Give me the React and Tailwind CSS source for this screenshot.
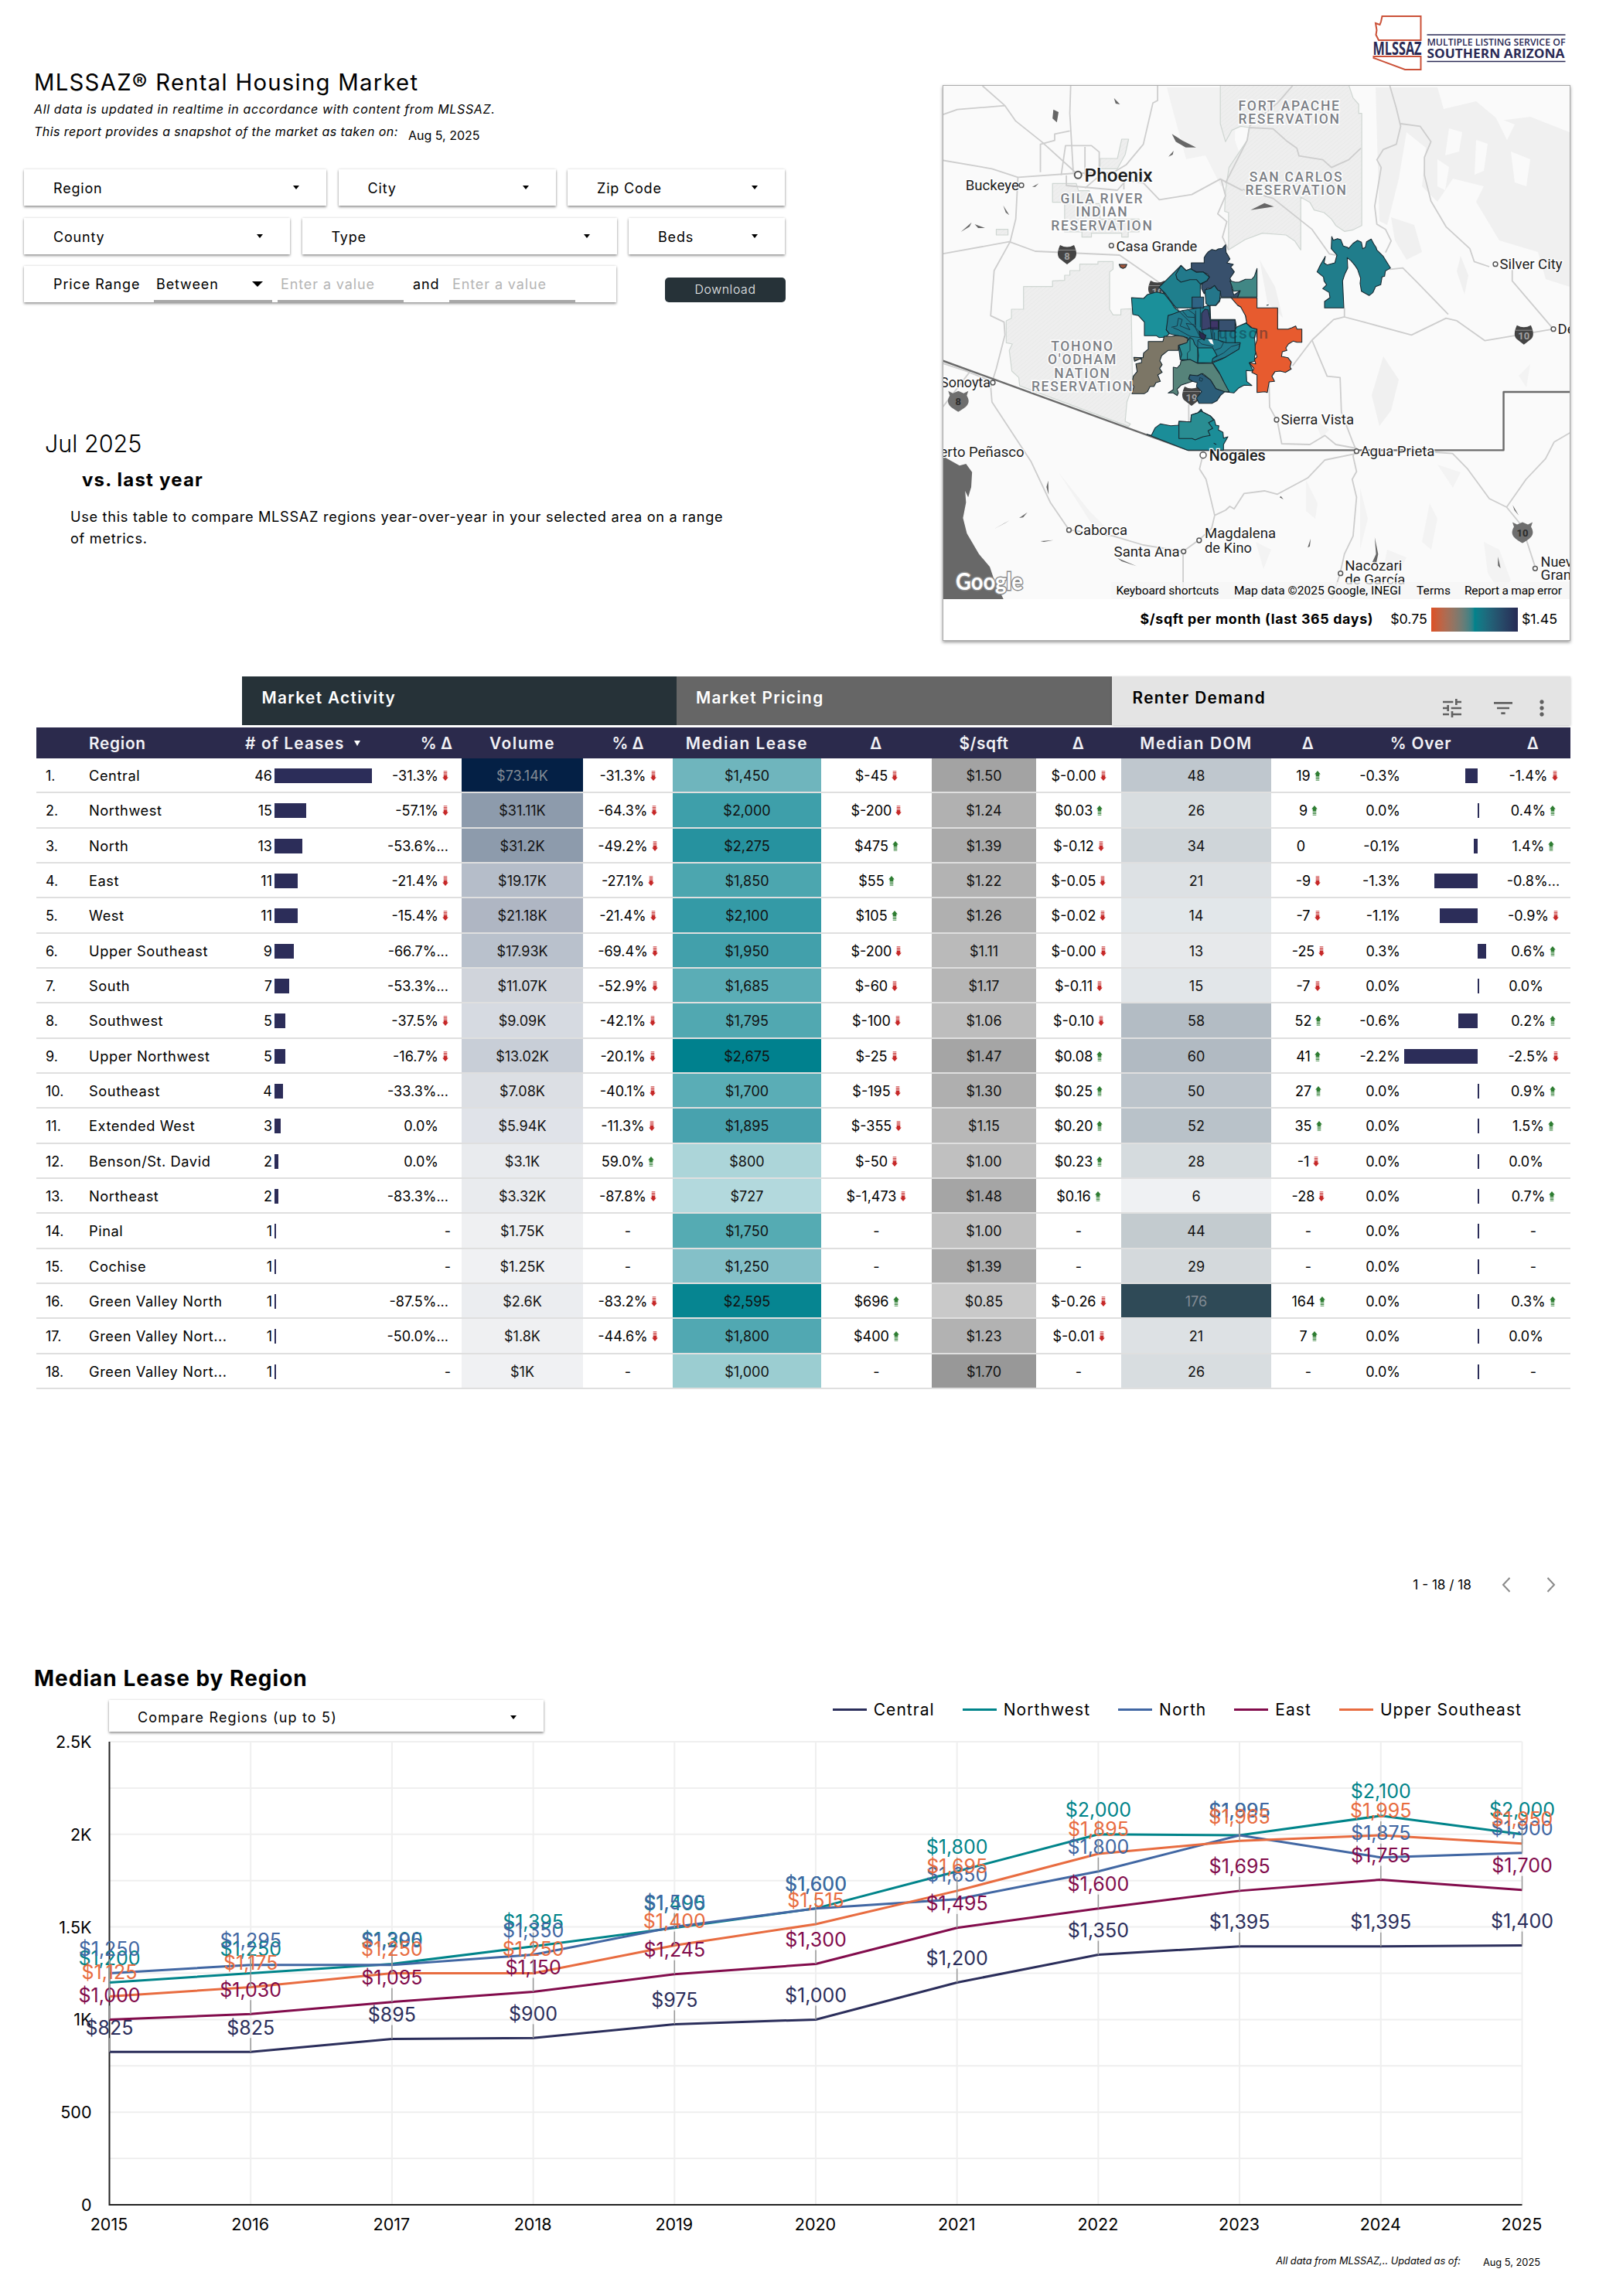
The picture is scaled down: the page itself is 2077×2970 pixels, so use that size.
import { MdTune, MdFilterList, MdMoreVert } from "react-icons/md";

const filters = [
  [
    { label: "Region", width: "w-[391px]" },
    { label: "City", width: "w-[281px]" },
    { label: "Zip Code", width: "w-[281px]" },
  ],
  [
    { label: "County", width: "w-[344px]" },
    { label: "Type", width: "w-[407px]" },
    { label: "Beds", width: "w-[202px]" },
  ],
];

// region, leases, leases Δ, volume, volume Δ, lease, lease Δ, $/sqft, $/sqft Δ, DOM, DOM Δ, % over, % over bar px, % over Δ
// Δ values end in "+" (up), "!" (down) or "=" (no arrow)
const rows = [
  ["Central", 46, "-31.3%!", ["$73.14K", "#042045"], "-31.3%!", ["$1,450", "#6fb5bd"], "$-45!", ["$1.50", "#a3a3a3"], "$-0.00!", ["48", "#bfc7ce"], "19+", "-0.3%", -16, "-1.4%!"],
  ["Northwest", 15, "-57.1%!", ["$31.11K", "#8d9bac"], "-64.3%!", ["$2,000", "#3e9faa"], "$-200!", ["$1.24", "#b1b1b1"], "$0.03+", ["26", "#d8dde0"], "9+", "0.0%", 0, "0.4%+"],
  ["North", 13, "-53.6%...", ["$31.2K", "#8d9bac"], "-49.2%!", ["$2,275", "#26929f"], "$475+", ["$1.39", "#aaaaaa"], "$-0.12!", ["34", "#cfd5d9"], "0=", "-0.1%", -5, "1.4%+"],
  ["East", 11, "-21.4%!", ["$19.17K", "#b5bdc9"], "-27.1%!", ["$1,850", "#4ca6af"], "$55+", ["$1.22", "#b3b3b3"], "$-0.05!", ["21", "#dde1e4"], "-9!", "-1.3%", -56, "-0.8%..."],
  ["West", 11, "-15.4%!", ["$21.18K", "#afb6c3"], "-21.4%!", ["$2,100", "#349aa6"], "$105+", ["$1.26", "#b0b0b0"], "$-0.02!", ["14", "#e2e7ea"], "-7!", "-1.1%", -49, "-0.9%!"],
  ["Upper Southeast", 9, "-66.7%...", ["$17.93K", "#b9c1cc"], "-69.4%!", ["$1,950", "#42a0ab"], "$-200!", ["$1.11", "#bababa"], "$-0.00!", ["13", "#e7e9eb"], "-25!", "0.3%", 11, "0.6%+"],
  ["South", 7, "-53.3%...", ["$11.07K", "#d0d4db"], "-52.9%!", ["$1,685", "#5badb6"], "$-60!", ["$1.17", "#b6b6b6"], "$-0.11!", ["15", "#e2e6e9"], "-7!", "0.0%", 0, "0.0%="],
  ["Southwest", 5, "-37.5%!", ["$9.09K", "#d6dae1"], "-42.1%!", ["$1,795", "#51a8b1"], "$-100!", ["$1.06", "#bdbdbd"], "$-0.10!", ["58", "#b3bcc4"], "52+", "-0.6%", -25, "0.2%+"],
  ["Upper Northwest", 5, "-16.7%!", ["$13.02K", "#c8ced7"], "-20.1%!", ["$2,675", "#00818e"], "$-25!", ["$1.47", "#a5a5a5"], "$0.08+", ["60", "#b1bac2"], "41+", "-2.2%", -95, "-2.5%!"],
  ["Southeast", 4, "-33.3%...", ["$7.08K", "#dcdfe4"], "-40.1%!", ["$1,700", "#5aadb6"], "$-195!", ["$1.30", "#afafaf"], "$0.25+", ["50", "#bcc4cb"], "27+", "0.0%", 0, "0.9%+"],
  ["Extended West", 3, "0.0%=", ["$5.94K", "#e0e3e9"], "-11.3%!", ["$1,895", "#48a2ae"], "$-355!", ["$1.15", "#b8b8b8"], "$0.20+", ["52", "#b9c2c9"], "35+", "0.0%", 0, "1.5%+"],
  ["Benson/St. David", 2, "0.0%=", ["$3.1K", "#e9ebee"], "59.0%+", ["$800", "#acd5d9"], "$-50!", ["$1.00", "#c0c0c0"], "$0.23+", ["28", "#d5dbde"], "-1!", "0.0%", 0, "0.0%="],
  ["Northeast", 2, "-83.3%...", ["$3.32K", "#e9ebee"], "-87.8%!", ["$727", "#b3d9dd"], "$-1,473!", ["$1.48", "#a5a5a5"], "$0.16+", ["6", "#eff1f3"], "-28!", "0.0%", 0, "0.7%+"],
  ["Pinal", 1, "-", ["$1.75K", "#eff0f2"], "-", ["$1,750", "#55abb3"], "-", ["$1.00", "#c0c0c0"], "-", ["44", "#c3cbcf"], "-", "0.0%", 0, "-"],
  ["Cochise", 1, "-", ["$1.25K", "#f0f1f3"], "-", ["$1,250", "#84c0c8"], "-", ["$1.39", "#aaaaaa"], "-", ["29", "#d4d9dc"], "-", "0.0%", 0, "-"],
  ["Green Valley North", 1, "-87.5%...", ["$2.6K", "#ebedf0"], "-83.2%!", ["$2,595", "#068591"], "$696+", ["$0.85", "#c9c9c9"], "$-0.26!", ["176", "#2f4a57"], "164+", "0.0%", 0, "0.3%+"],
  ["Green Valley Nort...", 1, "-50.0%...", ["$1.8K", "#eff0f2"], "-44.6%!", ["$1,800", "#51a8b2"], "$400+", ["$1.23", "#b2b2b2"], "$-0.01!", ["21", "#dde1e4"], "7+", "0.0%", 0, "0.0%="],
  ["Green Valley Nort...", 1, "-", ["$1K", "#f0f1f3"], "-", ["$1,000", "#9bcdd1"], "-", ["$1.70", "#989898"], "-", ["26", "#d8dde0"], "-", "0.0%", 0, "-"],
];

const series = [
  { name: "Central", color: "#2b2e5b", values: [825, 825, 895, 900, 975, 1000, 1200, 1350, 1395, 1395, 1400] },
  { name: "Northwest", color: "#00848a", values: [1200, 1250, 1300, 1395, 1495, 1600, 1800, 2000, 1995, 2100, 2000] },
  { name: "North", color: "#4167a3", values: [1250, 1295, 1295, 1350, 1500, 1600, 1650, 1800, 1995, 1875, 1900] },
  { name: "East", color: "#820c4c", values: [1000, 1030, 1095, 1150, 1245, 1300, 1495, 1600, 1695, 1755, 1700] },
  { name: "Upper Southeast", color: "#e86c40", values: [1125, 1175, 1250, 1250, 1400, 1515, 1695, 1895, 1965, 1995, 1950] },
];

const COLS =
  "grid grid-cols-[55px_203px_188px_104px_157px_116px_192px_143px_135px_110px_194px_96px_195px_96px]";

function Caret({ className = "border-x-[4.5px] border-t-[5px]" }) {
  return <span className={`block h-0 w-0 border-x-transparent border-t-black ${className}`} />;
}

function FilterBox({ label, width }) {
  return (
    <div
      className={`${width} flex h-[47px] items-center justify-between bg-white pl-[38px] pr-[35px] shadow-[0_2px_3px_rgba(0,0,0,0.38),0_0_3px_rgba(0,0,0,0.14)]`}
    >
      <span className="pt-[2px] text-[18px] tracking-[0.045em]">{label}</span>
      <Caret />
    </div>
  );
}

function Logo() {
  return (
    <svg width="252" height="74" viewBox="1774 18 252 74" fill="none">
      <path d="M1787.5 21H1837.5V52H1783L1779.5 45L1780.5 39L1779 30L1784.5 32L1786 28Z" stroke="#cb5138" strokeWidth="2" />
      <path d="M1776.5 73H1837.5V90H1817L1776.5 75Z" stroke="#cb5138" strokeWidth="2" />
      <g fill="#2a2a55" fontFamily="Open Sans, sans-serif" fontWeight="700">
        <text x="1775.5" y="71" fontSize="23" textLength="63" lengthAdjust="spacingAndGlyphs">MLSSAZ</text>
        <text x="1845.5" y="59.3" fontSize="12.2" fontWeight="600" textLength="179" lengthAdjust="spacingAndGlyphs">MULTIPLE LISTING SERVICE OF</text>
        <text x="1845.5" y="75.3" fontSize="16" textLength="178" lengthAdjust="spacingAndGlyphs">SOUTHERN ARIZONA</text>
      </g>
      <path d="M1845.5 45H2024.5M1845.5 79.5H2024.5" stroke="#2a2a55" strokeWidth="1.6" />
    </svg>
  );
}

const cities = [
  { name: "Buckeye", x: 29.8, y: 135, len: 69, cx: 102, cy: 128.7 },
  { name: "Casa Grande", x: 224.4, y: 214, len: 105, cx: 218.3, cy: 206.7 },
  { name: "Silver City", x: 720.5, y: 237, len: 81, cx: 715, cy: 230.7 },
  { name: "De", x: 795.5, y: 321, len: 22, cx: 790, cy: 314.7 },
  { name: "Sierra Vista", x: 437.5, y: 438, len: 94.5, cx: 432, cy: 432 },
  { name: "Agua Prieta", x: 540.4, y: 478.7, len: 96, cx: 535.4, cy: 472.7 },
  { name: "Sonoyta", x: -3, y: 390, len: 65, cx: 65, cy: 384 },
  { name: "Caborca", x: 170, y: 580.7, len: 69, cx: 163.5, cy: 574.7 },
  { name: "Magdalena", x: 339, y: 585.3, len: 92, cx: 331.8, cy: 588 },
  { name: "de Kino", x: 339, y: 603.7, len: 61 },
  { name: "Santa Ana", x: 221.6, y: 609, len: 85, cx: 311.7, cy: 602.3 },
  { name: "Nacozari", x: 520.3, y: 627, len: 74, cx: 514.7, cy: 630.7 },
  { name: "de García", x: 520.3, y: 645, len: 78 },
  { name: "Nuevo", x: 773.6, y: 621.7, len: 51, cx: 766.4, cy: 624.3 },
  { name: "Grande", x: 773.6, y: 639, len: 60 },
];

const areas = [
  { x: 447.6, y: 31.7, lines: ["FORT APACHE", "RESERVATION"] },
  { x: 456.5, y: 123.7, lines: ["SAN CARLOS", "RESERVATION"] },
  { x: 205.4, y: 152, lines: ["GILA RIVER", "INDIAN", "RESERVATION"] },
  { x: 180, y: 343, lines: ["TOHONO", "O'ODHAM", "NATION", "RESERVATION"] },
];

const zips = [
  ["#38506c", "M355 160L362 148L370 138L385 128L400 132L410 126L425 124L438 110L440 140L448 152L455 165L443 180L468 186L458 196L472 215L455 240L465 262L462 280L470 305L495 288L485 313H420L418 290L408 286L395 268L380 278L365 280L355 300L345 280V265L352 255L365 250L375 235L368 224L350 215H325L305 205V180H355Z"],
  ["#418785", "M455 250L475 255L490 255L515 244L540 243L550 232L560 202V313H485L495 288L468 290L462 270Z"],
  ["#1f7f8d", "M180 275L265 190L285 210L302 203L325 217L350 215L375 235L365 250L340 265V355H245L205 300Z"],
  ["#22798b", "M245 225L265 190L285 210L302 203L325 217L350 215L375 235L365 250L340 262L325 245L300 245L265 255L250 243Z"],
  ["#1b909a", "M73 315L120 318L135 303L170 293L200 300L228 335L240 355L260 370L235 380L215 385V405L208 440L220 455L205 468L180 470L170 463H123V410L100 385L78 380Z"],
  ["#217a8c", "M208 440L215 385L235 378L270 365L335 355L375 345L380 400H475V490H495L490 515L465 530L440 545L388 565L330 570L262 555L255 500L285 490L290 470L250 462L220 455Z"],
  ["#24768a", "M358 285L380 280L395 268L408 286L418 290L415 325L400 345L375 348L362 338Z"],
  ["#2f6384", "M308 313H353V355H308Z"],
  ["#3b426c", "M345 375L358 360L370 362L378 400L380 435L345 440Z"],
  ["#3f3568", "M380 404H410V438H380Z"],
  ["#37506f", "M412 402H475V445H412Z"],
  ["#1c8090", "M410 445H475V490H440L410 480Z"],
  ["#2a8a90", "M257 500L285 490L300 470L312 478L318 495L330 510V570L300 556L262 555L268 535Z"],
  ["#1b909a", "M330 510H388L405 540L388 552L385 568H330L333 540Z"],
  ["#1b8e98", "M480 430L495 420L520 415L535 430L560 437L550 470L553 500L558 520L550 545L555 560L530 568L545 600L518 598L520 640L540 656L510 655L490 665L470 685L435 680L430 640L410 600L388 568L420 555L440 545L465 530L490 515L495 490H475V440Z"],
  ["#e75b2f", "M458 316H560V355H640V437H680L695 432L710 425L715 437H734V488H715L700 484L682 495L672 510L676 520L658 525L655 543L680 548L693 565L688 585L693 592L670 605L650 600L630 602L618 620L628 640L607 642L600 683L590 680L560 683V615L540 605L548 590L530 568L555 572L550 555L560 545L553 520V500L560 480V437L540 432L520 415L515 385L500 370L497 352L485 345L463 332Z"],
  ["#7c7666", "M138 485H195L200 465H230L250 462L275 466L292 475L288 490L255 500V520H215L190 540L183 560L192 575L182 590L192 605L175 615L185 640L168 645L160 660L145 660L135 680L122 688H75L82 660L75 650L80 620L95 602L90 572L112 567V550L85 562L82 547L118 548L120 530L138 515Z"],
  ["#56837a", "M235 585L250 588L262 575L265 560L300 555L330 570H388L402 592L415 610L430 640L452 680L430 680L400 668L392 655L380 635L350 610L325 620L300 615L295 630L310 640L265 655L250 670L255 685L250 695L235 685L215 685L235 672Z"],
  ["#2c5d78", "M295 630L300 615L330 618L345 610L380 635L392 655L400 668L435 680L418 695L405 715L385 725L335 725L325 705L345 680L325 660L328 645L310 640Z"],
  ["#1b8d98", "M133 845L150 850L165 820L185 805L225 812L255 810L257 795L303 797L305 770L330 762L343 748L350 760L380 775L395 790L400 810L412 812L410 828L428 838L430 860L447 855L430 885V907H290Z"],
  ["#298d92", "M257 795L303 797L305 770L330 762L343 755L380 775L392 790L372 800L388 822L370 832L378 850L350 855L320 867L308 862H257Z"],
  ["#207d8b", "M850 78L856 92L872 86L885 90L895 115L912 120L915 125L932 105L950 93L965 100L970 125L980 120L985 98L1003 88L1015 110L1022 120L1025 130L1050 155L1078 200L1058 212L1055 232L1045 235L1040 265L1020 272L1010 295L995 307L965 290L960 260L962 240L955 220L950 205L940 190L925 172L910 160L912 200L900 225L892 250L897 355H822V330L843 315L840 295L815 280L830 265L820 250L818 235L793 215L805 190L825 155L820 180L832 188L862 180L870 150L848 125Z"],
  ["#a0563c", "M25 186H55L50 197L40 202L30 197Z"],
];

function Shield({ x, y, label, us }) {
  return (
    <g transform={`translate(${x} ${y})`}>
      <path
        d={us ? "M-13 0L-7 3L0 0L7 3L13 0L11 6C17 16 11 21 0 27C-11 21 -17 16 -11 6Z" : "M-9 0Q0 5 9 0Q15 13 9 18Q4 22 0 25Q-4 22 -9 18Q-15 13 -9 0Z"}
        fill={us ? "#6e6e6e" : "#444"}
      />
      {!us && <path d="M-11 6.5H11" stroke="#8a8a8a" strokeWidth="1" />}
      <text y="18.5" fontSize="13" fontWeight="700" textAnchor="middle" fill={us ? "#2b2b2b" : "#a0a0a0"}>{label}</text>
    </g>
  );
}

function RegionMap() {
  return (
    <svg className="block" width="810" height="664" viewBox="1 0 810 664" fontFamily="Roboto, sans-serif">
      <defs>
        <pattern id="hatch" width="9" height="9" patternUnits="userSpaceOnUse" patternTransform="rotate(35)">
          <rect width="9" height="9" fill="#eeeeee" />
          <path d="M0 0V9" stroke="#e5e8e6" strokeWidth="2" />
        </pattern>
      </defs>
      <rect width="812" height="666" fill="#fafafa" />
      <g fill="#f0f0f0">
        <path d="M290 2L380 2L378 70L395 120L360 130L340 90L315 95L300 40Z" fill="#f2f2f2" />
        <path d="M560 2H640L648 30L690 20L720 45L760 40L811 60V260L780 250L770 215L720 200L690 150L700 130L660 120L640 150L620 130L625 80L600 60L590 120L575 180L565 175Z" />
        <path d="M655 55L672 60L668 85L650 90Z M690 70L705 75L700 110L688 115Z M735 85L760 95L755 130L740 125Z M715 40L740 50L730 70Z M640 95L655 105L650 135L640 130Z" fill="#fafafa" />
        <path d="M580 170L610 180L620 215L600 225L585 200Z M410 225L430 260L440 300L420 280Z M670 220L680 245L675 270L665 240Z M570 350L590 380L580 420L565 440L555 400Z M655 60L670 70" />
        <path d="M470 510L485 540L482 560L470 550Z M630 540L640 560L632 600L620 590Z M700 590L720 600L735 640L720 655L705 630Z M640 490L670 500L660 520Z M540 520L550 560L540 600Z M150 500L190 550L210 570L195 570Z M760 360L745 375L755 390Z M575 600L600 610L590 630L570 625Z M405 590L425 600L415 625Z M480 430L500 445L490 455Z" fill="#f3f3f3" />
      </g>
      <g transform="translate(-20 -111) scale(0.5593 0.33333)" fill="none" strokeLinejoin="round">
        <g fill="url(#hatch)" stroke="#cfd6d2" strokeWidth="1.2">
          <path vectorEffect="non-scaling-stroke" d="M678 330H975L985 380L998 405V440H1005V875L985 892L965 898L945 875L935 850L918 825L895 815L885 785L864 765V970L850 935L830 912L775 905L735 930L697 970V825L688 820L690 740L698 650L740 545L745 495L725 490L705 505L690 550L678 480Z" />
          <path vectorEffect="non-scaling-stroke" d="M223 1112H290V1090L318 1088V1068H330V1050H353V1025H395V1015H430V1045L422 1055V1200L430 1222H448V1200L472 1198L475 1500L462 1560L458 1635L470 1645L466 1655L214 1497L212 1465L196 1440L190 1360L197 1335L183 1330V1245L195 1235V1200H223Z" />
          <path vectorEffect="non-scaling-stroke" d="M290 712H345L350 740H375V790H400V850H490V900H465V920H450V905H380V920H358V900H318V785H290Z M400 615H440L450 540H466L458 600L440 655H400Z M160 890H187V912H160Z" />
        </g>
        <g stroke="#cdcdcd" strokeWidth="1.8">
          <path vectorEffect="non-scaling-stroke" d="M36 445L70 425L180 410L128 333M180 410L205 470L265 550L345 672M332 333L330 440L338 668M533 333V390L522 400L500 560L460 640L430 670L345 672M36 622L150 655L210 688L345 672M262 668V560L295 545V520L330 508" />
          <path vectorEffect="non-scaling-stroke" d="M36 985L190 938L250 975L445 990L540 1100M210 688L205 850L192 938L155 1050L147 1225L178 1250L180 1300L160 1430L147 1500L150 1560L240 1790L285 1950L328 2056L430 2080L500 2115L592 2140V2328" />
          <path vectorEffect="non-scaling-stroke" d="M310 680L320 565H380L398 590V670M365 570V680M322 680V720L440 738L460 700L500 710L537 775L612 755L678 695L730 740M455 705V735M400 680L365 730" />
          <path vectorEffect="non-scaling-stroke" d="M690 710L740 545L745 495L800 500L830 545L855 575L860 605L915 620L935 650L975 620L1003 575M745 490L810 400L845 333M680 695L690 760L672 830L693 860L683 920L697 970" />
          <path vectorEffect="non-scaling-stroke" d="M730 735L800 770L890 890L930 985L1005 1010L1070 1045L1100 1040L1130 1090L1205 1220M1070 333L1085 420L1095 490L1085 560L1055 580L1040 620L1050 650L1035 800L1040 870L1060 890L1073 935L1060 980M1095 480L1140 490L1165 550L1150 610V680L1165 780L1200 880L1255 965L1265 1015L1300 1035" />
          <path vectorEffect="non-scaling-stroke" d="M845 1420L890 1320L940 1240L965 1230L1010 1250L1120 1300L1200 1235L1225 1245L1290 1322L1448 1277L1353 1090V1040M965 1230V1195M890 1320L925 1460L955 1465L958 1600L983 1710L993 1750" />
          <path vectorEffect="non-scaling-stroke" d="M540 1110L600 1240L800 1430L790 1440L792 1580L810 1635L820 1722L885 1725L920 1690L945 1725L993 1740L985 1770L993 1830L983 1860L993 1930L985 2080L965 2150L955 2225L935 2328M605 1570V1690M637 1770L630 1820L645 1860L665 2000L658 2050L629 2095L592 2140M665 2000L690 1980L700 1965L710 1975L733 1915L780 1905L810 1918L880 1855L920 1785L993 1760" />
          <path vectorEffect="non-scaling-stroke" d="M1175 1755L1215 1760L1250 1820L1300 1935L1340 1968L1360 1920L1385 1860L1430 1780L1450 1715L1486 1680M1340 1968L1375 2040L1406 2200M36 1410L90 1440L150 1480M36 1580L100 1440" />
        </g>
        <path d="M36 1770L75 1807L90 1800L104 1832L102 1890L95 1930L88 1905L90 1950L83 2010L92 2070L120 2150L145 2200L155 2250L178 2330H30Z" fill="#686868" />
        <path vectorEffect="non-scaling-stroke" d="M30 1396L605 1747H1333V1521H1490" stroke="#6a6a6a" strokeWidth="2.4" />
        <path d="M292 425L304 435L300 475L290 460Z M432 380L446 405L436 402Z M566 520L590 545L622 572L598 572L575 550Z M558 608L570 585L568 600Z M748 815L780 788L802 802L778 808Z M176 797L190 835L182 825Z M78 900L103 863L98 880Z M110 870L134 885L118 885Z M243 725L258 712L250 725Z M1035 2085L1043 2150L1038 2190L1030 2180L1038 2150Z M280 1865L281 1920L276 1890Z M213 2010L232 1988L222 2008Z M155 2053L190 2020L180 2030Z M262 2100L292 2096L270 2103Z M815 1930L818 1925L824 1938Z M1354 1960L1368 2000L1358 1980Z M880 2125L887 2090L885 2120Z M1320 2160L1326 2205L1320 2195Z M440 2165L484 2197L450 2178Z" fill="#666" />
      </g>

      <Shield x={161} y={206} label="8" />
      <Shield x={751.8} y={309.7} label="10" />
      <Shield x={278} y={252} label="10" />
      <Shield x={322} y={389} label="19" />
      <Shield x={20.3} y={394.7} label="8" us />
      <Shield x={750} y={564.5} label="10" us />

      <g transform="translate(220 169) scale(0.33333)" stroke="#16272f" strokeWidth="3.2" strokeLinejoin="round">
        {zips.map(([fill, d], i) => (
          <path key={i} d={d} fill={fill} />
        ))}
        <path d="M378 345L400 346L415 330L418 316H460L485 345L497 352L515 385L520 412L480 430L475 400H380Z" fill="#fafafa" />
        <path d="M370 478L385 475L392 498L380 492Z" fill="#fafafa" stroke="none" />
        <path
          d="M180 275L260 370L345 455M228 430L250 425L255 395L270 400L262 425L300 440L285 415L315 420L340 470L300 465L255 440L235 432M290 360L318 380L320 420M322 365V430M340 350V430M270 365L290 390L318 392M345 440L360 470L330 480L345 495L390 505M350 470L410 480M380 440L385 475M395 450V480M440 470V490M410 480L430 490L420 510L395 520M388 552L430 530L460 505L495 495M300 470V520L290 530V556M330 480V510M338 625L350 630L345 640L336 636Z"
          fill="none"
          stroke="#173947"
          strokeWidth="3"
        />
        <path d="M335 445L362 462L355 480L340 470ZM392 880L402 885M597 345L605 343" fill="#2b2a50" />
      </g>
      <text x="343" y="327" fontSize="21" fontWeight="500" textLength="78" fill="#123" opacity="0.4">Tucson</text>

      <g fill="#7c8086" stroke="#fff" strokeWidth="3" paintOrder="stroke" fontSize="17.5" fontWeight="500" textAnchor="middle" letterSpacing="1.7">
        {areas.map((area) =>
          area.lines.map((line, i) => (
            <text key={area.x + line} x={area.x + 1} y={area.y + i * 17.3}>{line}</text>
          ))
        )}
      </g>
      <g fontSize="18.5" fill="#1c1c1c" stroke="#fff" strokeWidth="2.5" paintOrder="stroke">
        {cities.map((c) => (
          <text key={c.name} x={c.x} y={c.y} textLength={c.len} lengthAdjust="spacingAndGlyphs">{c.name}</text>
        ))}
        <text x="105.5" y="480" textAnchor="end">Puerto Peñasco</text>
        <text x="183.6" y="123.7" fontSize="23.5" fontWeight="500" textLength="88" lengthAdjust="spacingAndGlyphs">Phoenix</text>
        <text x="344.7" y="484.7" fontSize="19.5" fontWeight="500" textLength="73" lengthAdjust="spacingAndGlyphs">Nogales</text>
      </g>
      <g fill="#fff" stroke="#555" strokeWidth="1.5">
        {cities.filter((c) => c.cx).map((c) => (
          <circle key={c.name} cx={c.cx} cy={c.cy} r="2.9" />
        ))}
        <circle cx="175.2" cy="115.3" r="4.5" strokeWidth="2" />
        <circle cx="337" cy="477.7" r="4" />
      </g>

      <text x="17" y="652" fontSize="31" fontFamily="Lato, sans-serif" fontWeight="700" textLength="87" lengthAdjust="spacingAndGlyphs" fill="#fff" stroke="#8a8a8a" strokeWidth="3" paintOrder="stroke">Google</text>
      <rect x="218" y="642" width="594" height="24" fill="#f5f5f5" opacity="0.75" />
      <g fontSize="15.5" fill="#000">
        <text x="224.4" y="658" textLength="133">Keyboard shortcuts</text>
        <text x="377" y="658" textLength="216">Map data ©2025 Google, INEGI</text>
        <text x="613" y="658" textLength="44">Terms</text>
        <text x="675" y="658" textLength="126">Report a map error</text>
      </g>
    </svg>
  );
}

function Arrow({ up }) {
  return (
    <svg
      className={up ? "ml-[5px] shrink-0" : "ml-[5px] shrink-0 rotate-180"}
      width="8"
      height="13"
      viewBox="0 0 8 13"
      fill={up ? "#2e7d32" : "#c62828"}
    >
      <path d="M4 0L7.8 4.5H6.3V7.5H1.7V4.5H0.2Z" />
      <path d="M1.7 8.2H6.3V9.4H1.7ZM1.7 10H6.3V11.1H1.7ZM1.7 11.7H6.3V12.7H1.7Z" opacity="0.85" />
    </svg>
  );
}

function Delta({ value, right }) {
  const mark = value.slice(-1);
  const hasMark = "+!=".includes(mark);
  const text = hasMark ? value.slice(0, -1) : value;
  const align = right ? (value === "-" ? "justify-end pr-[14px]" : "justify-end pr-[17px]") : "justify-center";

  return (
    <div className={`flex items-center pt-[2px] ${align}`}>
      {text}
      {mark === "=" && <span className={right ? "w-[13px]" : "w-[19px]"} />}
      {mark !== "=" && hasMark && <Arrow up={mark === "+"} />}
    </div>
  );
}

function Shade({ cell }) {
  const [text, color] = cell;
  const dark = text === "$73.14K" || text === "176";
  return (
    <div
      className={`flex items-center justify-center pt-[2px] ${dark ? "text-[#838b94]" : "text-[#111]"}`}
      style={{ backgroundColor: color }}
    >
      {text}
    </div>
  );
}

function Row({ row, index }) {
  const [region, leases, leasesD, volume, volumeD, lease, leaseD, sqft, sqftD, dom, domD, over, bar, overD] = row;
  return (
    <div className={`${COLS} h-[45.33px] border-b-2 border-[#dfdfdf] text-[18px]`}>
      <div className="flex items-center pl-3 pt-[2px]">{index + 1}.</div>
      <div className="flex items-center whitespace-nowrap pl-[13px] pt-[2px] text-[18.3px] tracking-[0.03em]">
        {region}
      </div>
      <div className="flex items-center pt-[2px]">
        <span className="w-[47px] text-right">{leases}</span>
        <span
          className="ml-[3px] h-[19px] bg-[#2c2d59]"
          style={{ width: leases === 1 ? 2 : leases * 2.74 }}
        />
      </div>
      <Delta value={leasesD} right />
      <Shade cell={volume} />
      <Delta value={volumeD} />
      <Shade cell={lease} />
      <Delta value={leaseD} />
      <Shade cell={sqft} />
      <Delta value={sqftD} />
      <Shade cell={dom} />
      <Delta value={domD} />
      <div className="flex items-center pt-[2px]">
        <span className="w-[71px] text-right">{over}</span>
        <span className="flex w-[100px] justify-end">
          {bar < 0 && <span className="h-[19px] bg-[#2c2d59]" style={{ width: -bar }} />}
        </span>
        {bar >= 0 && <span className="h-[19px] bg-[#2c2d59]" style={{ width: bar || 1.5 }} />}
      </div>
      <Delta value={overD} />
    </div>
  );
}

function RegionTable() {
  return (
    <section className="w-[2031px] pl-[47px]">
      <div className="ml-[265.5px] flex h-[63px] text-[20.8px] font-semibold leading-[55px] tracking-[0.065em]">
        <div className="w-[562.5px] bg-[#263238] pl-[26px] text-white">Market Activity</div>
        <div className="w-[562.5px] bg-[#666666] pl-[25px] text-white">Market Pricing</div>
        <div className="flex flex-1 bg-[#e4e4e4] pl-[27px] text-black shadow-[0_1px_3px_rgba(0,0,0,0.25)]">
          Renter Demand
          <div className="ml-auto flex items-start pr-[21px] pt-[25px] text-[32px] text-[#616161]">
            <MdTune className="mr-[34px]" />
            <MdFilterList className="mr-[18px]" />
            <MdMoreVert />
          </div>
        </div>
      </div>
      <div className={`${COLS} mt-[3px] h-[40px] items-center bg-[#2b2a4c] pt-px text-center text-[20.8px] font-semibold tracking-[0.075em] text-[#f1f1f5]`}>
        <span />
        <span className="pl-[13px] text-left tracking-[0.035em]">Region</span>
        <span className="flex items-center whitespace-nowrap pl-[12px] tracking-[0.055em]">
          # of Leases
          <span className="ml-3 block h-0 w-0 border-x-4 border-t-[7px] border-x-transparent border-t-white" />
        </span>
        <span className="pr-[12px] text-right tracking-normal">% Δ</span>
        <span>Volume</span>
        <span className="tracking-normal">% Δ</span>
        <span>Median Lease</span>
        <span>Δ</span>
        <span className="tracking-[0.03em]">$/sqft</span>
        <span>Δ</span>
        <span>Median DOM</span>
        <span>Δ</span>
        <span className="tracking-[0.04em]">% Over</span>
        <span>Δ</span>
      </div>
      {rows.map((row, i) => (
        <Row key={i} row={row} index={i} />
      ))}
      <div className="mt-[237px] flex h-8 items-center justify-end pr-[19px] text-[17.2px]">
        1 - 18 / 18
        <svg className="ml-[39px]" width="70" height="20" viewBox="0 0 70 20" fill="none" stroke="#8a8a8a" strokeWidth="2">
          <path d="M10.5 1L2 10L10.5 19M59.5 1L68 10L59.5 19" />
        </svg>
      </div>
    </section>
  );
}

const chartX = (i) => 141.5 + i * 182.7;
const chartY = (v) => 613 - v * 0.2396;

function LeaseChart() {
  const ticks = [
    [2500, "2.5K"],
    [2000, "2K"],
    [1500, "1.5K"],
    [1000, "1K"],
    [500, "500"],
    [0, "0"],
  ];
  return (
    <svg className="block" width="2077" height="660" viewBox="0 0 2077 660" fontSize="21.5">
      <g stroke="#efefef" strokeWidth="2">
        {Array.from({ length: 10 }, (_, i) => (
          <path key={i} d={`M${chartX(0)} ${chartY((i + 1) * 250)}H${chartX(10)}`} />
        ))}
        {Array.from({ length: 10 }, (_, i) => (
          <path key={i} d={`M${chartX(i + 1)} ${chartY(2500)}V613`} />
        ))}
      </g>
      <path d={`M${chartX(0)} ${chartY(2500)}V613H${chartX(10)}`} fill="none" stroke="#222" strokeWidth="2" />
      {ticks.map(([value, label]) => (
        <text key={label} x="118.5" y={chartY(value) + 8} textAnchor="end">{label}</text>
      ))}
      {Array.from({ length: 11 }, (_, i) => (
        <text key={i} x={chartX(i) - 0.5} y="646" textAnchor="middle">{2015 + i}</text>
      ))}
      {series.map((s) => (
        <polyline
          key={s.name}
          points={s.values.map((v, i) => `${chartX(i)},${chartY(v)}`).join(" ")}
          fill="none"
          stroke={s.color}
          strokeWidth="3"
        />
      ))}
      {series.map((s) =>
        s.values.map((v, i) => (
          <g key={s.name + i}>
            <path d={`M${chartX(i)} ${chartY(v) - 18}V${chartY(v)}`} stroke="#999" strokeWidth="1.5" />
            <text x={chartX(i)} y={chartY(v) - 22.5} fontSize="25" fontWeight="375" fill={s.color} textAnchor="middle">
              ${v.toLocaleString("en-US")}
            </text>
          </g>
        ))
      )}
    </svg>
  );
}

export default function App() {
  return (
    <div className="h-[2970px] w-[2077px] overflow-hidden bg-white font-['Inter','Liberation_Sans',sans-serif] text-black">
      <header className="flex h-[875px]">
        <div className="w-[1219px] pl-[31px] pt-[89px]">
          <div className="pl-[13px]">
            <h1 className="h-[38px] whitespace-nowrap text-[29.3px] leading-9 tracking-[0.043em]">
              MLSSAZ® Rental Housing Market
            </h1>
            <p className="whitespace-nowrap text-[16px] italic leading-[29px] tracking-[0.04em]">
              All data is updated in realtime in accordance with content from MLSSAZ.
            </p>
            <div className="flex h-[27px] whitespace-nowrap text-[16px] leading-7">
              <p className="w-[484px] italic tracking-[0.028em]">
                This report provides a snapshot of the market as taken on:
              </p>
              <p className="pt-[5px]">Aug 5, 2025</p>
            </div>
          </div>

          <div className="mt-[36px] flex flex-col gap-[15.5px]">
            {filters.map((line, i) => (
              <div key={i} className="flex gap-[15.5px]">
                {line.map((f) => (
                  <FilterBox key={f.label} label={f.label} width={f.width} />
                ))}
              </div>
            ))}
            <div className="flex">
              <div className="flex h-[47px] w-[766px] bg-white pl-[38px] text-[18px] leading-[48px] tracking-[0.05em] shadow-[0_2px_3px_rgba(0,0,0,0.38),0_0_3px_rgba(0,0,0,0.14)]">
                <span className="w-[130px]">Price Range</span>
                <div className="flex w-[153px] items-center justify-between border-b-[3px] border-[#a8a8a8] pl-[3px] pr-3 pt-[3px]">
                  Between
                  <Caret className="border-x-[7px] border-t-[7px]" />
                </div>
                <div className="ml-[7px] w-[163px] border-b-[3px] border-[#a8a8a8] pl-1 text-[#b5b5b5]">Enter a value</div>
                <span className="w-[59px] pl-[12px]">and</span>
                <div className="w-[163px] border-b-[3px] border-[#a8a8a8] pl-1 text-[#b5b5b5]">Enter a value</div>
              </div>
              <button className="ml-[63px] mt-[15px] h-[32px] w-[156px] rounded-[5px] bg-[#263238] text-[15.8px] font-light tracking-[0.04em] text-[#eceeef]">
                Download
              </button>
            </div>
          </div>

          <p className="mt-[163px] pl-[27px] text-[30.5px] font-light leading-10">Jul 2025</p>
          <p className="mt-[11px] pl-[75px] text-[24px] font-bold leading-8 tracking-[0.05em]">vs. last year</p>
          <p className="mt-[17px] whitespace-nowrap pl-[60px] text-[18.2px] leading-7 tracking-[0.038em]">
            Use this table to compare MLSSAZ regions year-over-year in your selected area on a range
            <br />
            of metrics.
          </p>
        </div>

        <div className="w-[812px] pt-[18px]">
          <div className="flex h-[92px] justify-end pr-[5px]">
            <Logo />
          </div>
          <div className="h-[719px] w-[812px] border border-[#aaa] bg-white shadow-[0_2px_4px_rgba(0,0,0,0.4)]">
            <RegionMap />
            <div className="flex h-[53px] items-center justify-end pr-[16px] text-[17.8px]">
              <span className="font-bold tracking-[0.038em]">$/sqft per month (last 365 days)</span>
              <span className="ml-[22px]">$0.75</span>
              <span className="ml-[5px] mr-[5px] h-[31px] w-[112px] bg-linear-to-r from-[#dd4f21] via-[#00838c] to-[#262a54]" />
              <span>$1.45</span>
            </div>
          </div>
        </div>
      </header>

      <RegionTable />

      <section className="mt-[88px]">
        <h2 className="h-[45px] pl-[44px] text-[28px] font-bold leading-[35px] tracking-[0.036em]">Median Lease by Region</h2>
        <div className="flex h-[40px]">
          <div className="ml-[141px] flex h-[41px] w-[562px] items-center justify-between bg-white pl-[37px] pr-[35px] shadow-[0_2px_3px_rgba(0,0,0,0.38),0_0_3px_rgba(0,0,0,0.14)]">
            <span className="pt-[5px] text-[18px] tracking-[0.065em]">Compare Regions (up to 5)</span>
            <Caret className="mt-[4px] border-x-[4.5px] border-t-[5px]" />
          </div>
          <div className="ml-auto flex h-[26px] items-center gap-[36px] pr-[109px] text-[21px] tracking-[0.05em]">
            {series.map((s) => (
              <div key={s.name} className="flex items-center gap-[9px]">
                <span className="h-[3px] w-[44px]" style={{ backgroundColor: s.color }} />
                {s.name}
              </div>
            ))}
          </div>
        </div>
        <LeaseChart />
      </section>
      <footer className="flex justify-end pr-[85px] pt-[16px] text-[12.8px]">
        <span className="mr-[29px] italic">All data from MLSSAZ,.. Updated as of:</span>
        <span className="pt-[2px]">Aug 5, 2025</span>
      </footer>
    </div>
  );
}
